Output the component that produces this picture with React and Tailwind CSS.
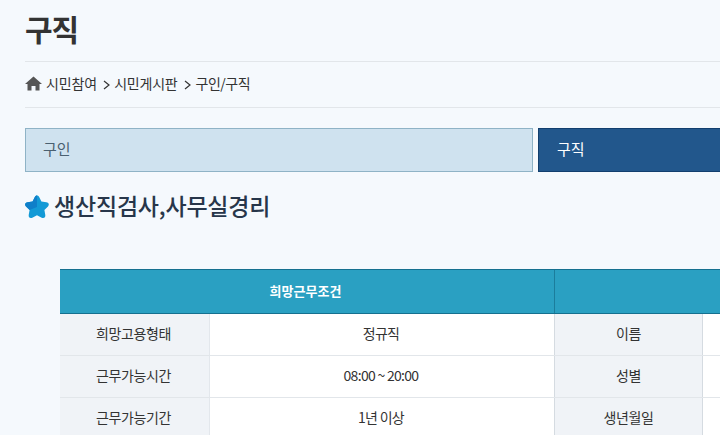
const font = { fontFamily: '"Noto Sans CJK KR", "Liberation Sans", sans-serif' };

function Row({ a, b, c }) {
  return (
    <div className="grid grid-cols-[150px_344px_149px_120px] h-[42px] border-b border-[#e2e6ea]">
      <div className="flex items-center justify-center bg-[#f0f3f7] border-r border-[#e3e7ec] pb-[3px] pr-[2px] text-[14px] text-[#333] tracking-[-0.4px]">{a}</div>
      <div className="flex items-center justify-center bg-white pb-[3px] pr-[2px] text-[14px] text-[#333] tracking-[-0.7px]">{b}</div>
      <div className="flex items-center justify-center bg-[#f0f3f7] border-x border-[#d5dbe1] pb-[3px] text-[14px] text-[#333] tracking-[-0.4px]">{c}</div>
      <div className="bg-white" />
    </div>
  );
}

function Chevron() {
  return (
    <svg width="7" height="10" viewBox="0 0 7 10" className="mx-[6px] mt-[2px] shrink-0">
      <path d="M1 1 L6 5 L1 9" fill="none" stroke="#333" strokeWidth="1.2" />
    </svg>
  );
}

export default function App() {
  return (
    <div style={font} className="w-[720px] h-[435px] overflow-hidden bg-[#f5f9fd] pl-[25px]">
      <div className="w-[720px]">
        <div className="h-[62px] border-b border-[#e2e6ea] flex items-start">
          <h1 className="text-[30px] leading-[56px] font-bold text-[#333] tracking-[-1.2px]">구직</h1>
        </div>
        <div className="h-[46px] border-b border-[#e2e6ea] flex items-center text-[14px] text-[#333] pb-[2px]">
          <svg width="17" height="15" viewBox="0 0 17 15" className="mr-[5px] shrink-0">
            <path d="M8.5 0.5 L0 8 L2.5 8 L2.5 14.5 L6.5 14.5 L6.5 10 L10.5 10 L10.5 14.5 L14.5 14.5 L14.5 8 L17 8 Z" fill="#555" />
          </svg>
          <span className="tracking-[-0.1px] -ml-[1px]">시민참여</span>
          <Chevron />
          <span className="tracking-[-0.2px] -ml-[2px]">시민게시판</span>
          <Chevron />
          <span className="tracking-[-0.5px] -ml-[1px]">구인/구직</span>
        </div>
        <div className="flex gap-[5px] mt-[20px]">
          <div className="w-[508px] shrink-0 h-[44px] bg-[#cfe2ef] border border-[#8fb3c6] flex items-center pl-[17px] pb-[2px] text-[15px] text-[#4a6070]">구인</div>
          <div className="w-[300px] shrink-0 h-[44px] bg-[#22578c] border border-[#123f6e] flex items-center pl-[18px] pb-[2px] text-[15px] text-white">구직</div>
        </div>
        <div className="flex items-center mt-[18px] h-[32px]">
          <svg width="26" height="26" viewBox="0 0 26 26" className="-ml-[1px] mt-[2px] shrink-0">
            <path d="M13 1.5 C14 1.5 14.8 2.2 15.3 3.2 L17.4 7.6 L22.4 8.3 C24.8 8.7 25.6 10.8 24 12.4 L20.4 16 L21.3 21 C21.7 23.4 19.8 24.8 17.7 23.7 L13 21.2 L8.3 23.7 C6.2 24.8 4.3 23.4 4.7 21 L5.6 16 L2 12.4 C0.4 10.8 1.2 8.7 3.6 8.3 L8.6 7.6 L10.7 3.2 C11.2 2.2 12 1.5 13 1.5 Z" fill="#139ad6" />
            <path d="M13 1.5 C12 1.5 11.2 2.2 10.7 3.2 L8.6 7.6 L3.6 8.3 C1.2 8.7 0.4 10.8 2 12.4 L5.6 16 L13 13 Z" fill="#0f7fc9" />
          </svg>
          <h2 className="ml-[4px] -mt-[2px] text-[23px] leading-[32px] font-medium text-[#27364a] tracking-[-0.2px]">생산직검사,사무실경리</h2>
        </div>
        <div className="ml-[35px] mt-[47px] w-[763px]">
          <div className="grid grid-cols-[495px_148px_120px] h-[45px] bg-[#2aa0c2] border-y border-[#15708f] text-white text-[13px] font-bold">
            <div className="flex items-center justify-center border-r border-[#1b7d9c] pb-[1px] pr-[3px]">희망근무조건</div>
            <div />
            <div />
          </div>
          <Row a="희망고용형태" b="정규직" c="이름" />
          <Row a="근무가능시간" b="08:00 ~ 20:00" c="성별" />
          <Row a="근무가능기간" b="1년 이상" c="생년월일" />
        </div>
      </div>
    </div>
  );
}
